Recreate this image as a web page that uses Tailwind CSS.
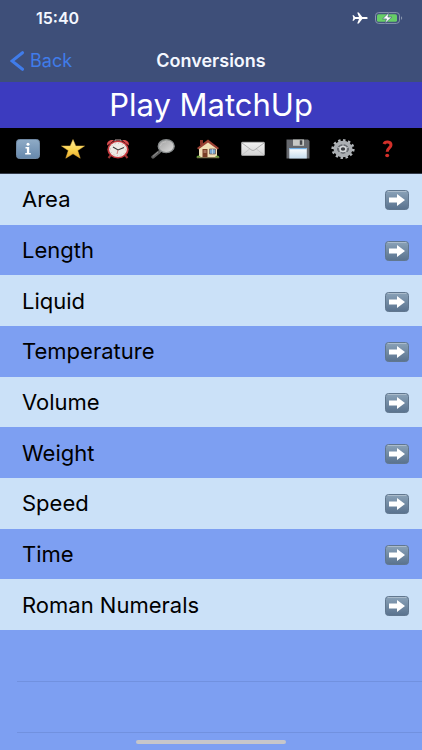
<!DOCTYPE html>
<html lang="en">
<head>
    <meta charset="UTF-8">
    <meta name="viewport" content="width=device-width, initial-scale=1.0">
    <title>Conversions</title>
    <script src="https://cdn.jsdelivr.net/npm/@tailwindcss/browser@4"></script>
</head>
<body class="bg-[#7d9ff2] font-['Inter','Liberation_Sans',sans-serif] text-black">
    <!-- Shared gradients and the row arrow -->
    <svg class="absolute" width="0" height="0" aria-hidden="true">
        <defs>
            <linearGradient id="key" x1="0" y1="0" x2="0" y2="1">
                <stop offset="0" stop-color="#8ba3b9"/>
                <stop offset="1" stop-color="#59728e"/>
            </linearGradient>
            <linearGradient id="info" x1="0" y1="0" x2="0" y2="1">
                <stop offset="0" stop-color="#8fabc6"/>
                <stop offset="1" stop-color="#6688ac"/>
            </linearGradient>
            <linearGradient id="gold" x1="0" y1="0" x2="0" y2="1">
                <stop offset="0" stop-color="#fff0a0"/>
                <stop offset="0.55" stop-color="#fbd44f"/>
                <stop offset="1" stop-color="#e9a92c"/>
            </linearGradient>
            <linearGradient id="glass" x1="0" y1="0" x2="1" y2="1">
                <stop offset="0" stop-color="#9b9b9b"/>
                <stop offset="1" stop-color="#e0e0e0"/>
            </linearGradient>
            <linearGradient id="paper" x1="0" y1="0" x2="0" y2="1">
                <stop offset="0" stop-color="#f2f2f2"/>
                <stop offset="1" stop-color="#d2d2d2"/>
            </linearGradient>
            <linearGradient id="label" x1="0" y1="0" x2="0" y2="1">
                <stop offset="0" stop-color="#ffffff"/>
                <stop offset="1" stop-color="#c5dcee"/>
            </linearGradient>
        </defs>
        <symbol id="arrow" viewBox="0 0 24 20">
            <rect x="0.5" y="0.5" width="23" height="19" rx="3" fill="url(#key)" stroke="#61778f"/>
            <path d="M2.5 1.5h19" stroke="#b3c2d0" stroke-width="0.8"/>
            <path d="M4 7.600h8V4L20 10l-8 6v-3.600H4z" fill="#fff"/>
        </symbol>
    </svg>

    <div class="min-h-screen flex flex-col">
        <!-- Status Bar and Navigation -->
        <header class="bg-[#3e4f79] text-[#f4f7ff]">
            <div class="h-10 flex items-center justify-between pl-9 pr-4 pb-1">
                <span class="text-base leading-5 font-semibold">15:40</span>
                <div class="flex items-center gap-1.5">
                    <svg class="w-4 h-3" viewBox="0 0 16 12" fill="#fff">
                        <path d="M15.800 6c0-.7-1-1.100-2-1.100H10.300L6.800.4H5.200L7 4.900H3.200L1.700 3.200H.5L1.300 6 .5 8.800h1.200l1.500-1.700H7l-1.800 4.500h1.600l3.500-4.500h3.500c1 0 2-.4 2-1.100z"/>
                    </svg>
                    <svg class="w-8 h-3" viewBox="0 0 32 12">
                        <rect x="1.500" y="0.600" width="24" height="10.800" rx="3.200" fill="none" stroke="#8996ae"/>
                        <rect x="3" y="2.200" width="20" height="7.600" rx="1.600" fill="#67ce67"/>
                        <path d="M27 4.200c1.600.5 1.600 3.100 0 3.600z" fill="#8996ae"/>
                        <path d="M15 .6 8.600 6.900h3.900L11 11.400l6.800-6.300h-3.900z" fill="#fff" stroke="#3e4f79" stroke-width="0.6"/>
                    </svg>
                </div>
            </div>
            <nav class="h-[42px] grid grid-cols-[1fr_auto_1fr] items-center px-2.5">
                <a href="#" class="flex items-center gap-1 text-lg text-[#407cea]">
                    <svg class="w-4 h-5" viewBox="0 0 16 20" fill="none" stroke="currentColor" stroke-width="3" stroke-linecap="round">
                        <path d="M12.500 1.700 2 10l10.500 8.300"/>
                    </svg>
                    Back
                </a>
                <h1 class="text-lg font-semibold">Conversions</h1>
            </nav>
        </header>

        <button class="h-[46px] bg-[#3c3bbf] text-white text-[31px] leading-9">Play MatchUp</button>

        <!-- Toolbar -->
        <div class="h-[46px] bg-black border-b border-[#333a48] grid grid-cols-9 items-center justify-items-center pl-[5px] pr-3 pb-1">
            <button aria-label="Info">
                <svg class="w-6 h-5" viewBox="0 0 24 20">
                    <rect x="0.5" y="0.5" width="23" height="19" rx="3" fill="url(#info)" stroke="#7089a4"/>
                    <circle cx="12" cy="5.2" r="1.5" fill="#fff"/>
                    <path d="M9.500 8h3.700v6h1.600v1.500H9.200V14h1.700V9.400H9.500z" fill="#fff"/>
                </svg>
            </button>
            <button aria-label="Favourites">
                <svg class="w-6 h-5" viewBox="0 0 24 20">
                    <path d="M12 .5 14.800 7h8.700l-6.800 4.600 2.500 7.600L12 14.800l-7.200 4.400 2.500-7.600L.5 7h8.700z" fill="url(#gold)" stroke="#e8b63d" stroke-width="0.5" stroke-linejoin="round"/>
                </svg>
            </button>
            <button aria-label="Timer">
                <svg class="w-6 h-5" viewBox="0 0 24 20">
                    <path d="m5 16-2.500 3M19 16l2.500 3" stroke="#9c3434" stroke-width="2"/>
                    <path d="M9 2V1h6v1" fill="none" stroke="#b9a5a5"/>
                    <path d="M1.300 6.500C0 3 4 0 8 1.200zM22.700 6.500C24 3 20 0 16 1.200z" fill="#d94d50"/>
                    <ellipse cx="12" cy="10.5" rx="10.7" ry="8.9" fill="#c5373d"/>
                    <ellipse cx="12" cy="10.5" rx="8.9" ry="7.4" fill="#eeeae5"/>
                    <ellipse cx="12" cy="10.5" rx="7.6" ry="6.2" fill="none" stroke="#a9a09c" stroke-width="0.8" stroke-dasharray="0.8 2.8"/>
                    <path d="m7 8 5 3 6-2.500" fill="none" stroke="#393939" stroke-width="1.1"/>
                    <path d="m12 11-1 4" stroke="#c5373d" stroke-width="0.6"/>
                </svg>
            </button>
            <button aria-label="Search">
                <svg class="w-6 h-5" viewBox="0 0 24 20">
                    <path d="m9.500 12-2 1.700" stroke="#bbb" stroke-width="1.8"/>
                    <path d="m8 13-6 5" stroke="#606060" stroke-width="3.4" stroke-linecap="round"/>
                    <path d="m7 13-5 4.300" stroke="#a0a0a0" stroke-width="0.8"/>
                    <ellipse cx="15.2" cy="7.2" rx="8" ry="6.5" fill="url(#glass)" stroke="#878b8c" stroke-width="1.3"/>
                    <path d="M9.500 7c.5-3 3-4 5.500-4.200" fill="none" stroke="#c9c9c9" stroke-width="0.8"/>
                </svg>
            </button>
            <button aria-label="Home">
                <svg class="w-6 h-5" viewBox="0 0 24 20">
                    <path d="M4 1h3v5H4z" fill="#8a3329"/>
                    <path d="M3 9 12 2l9 7v9.500H3z" fill="#f1dfb7"/>
                    <path d="M12 .5 23 9l-1.300 1.500L12 3.500 2.300 10.500 1 9z" fill="#9c4134"/>
                    <path d="M6.500 10h5v8.500h-5z" fill="#793d26"/>
                    <path d="M7.500 11h3v3h-3z" fill="#a6705a"/>
                    <path d="M13.500 10h6v5h-6z" fill="#76a5cf" stroke="#76605a" stroke-width="0.8"/>
                    <path d="M16.500 10v5" stroke="#dce4e9" stroke-width="0.6"/>
                    <path d="M.5 18.700c0-3 3.500-3 4.500 0zM19 18.700c.5-3 4-3 4.500 0z" fill="#659c39"/>
                    <path d="M1 18.800h22" stroke="#8b8055" stroke-width="0.8"/>
                </svg>
            </button>
            <button aria-label="Mail">
                <svg class="w-6 h-5" viewBox="0 0 24 20">
                    <rect x="0.5" y="3.2" width="23" height="13.3" rx="0.8" fill="url(#paper)" stroke="#bcbcbc" stroke-width="0.6"/>
                    <path d="m1 16 8-6.300M23 16l-8-6.300" stroke="#bababa" stroke-width="0.7"/>
                    <path d="m1 4 9 6.700c1.400 1 2.600 1 4 0L23 4" fill="none" stroke="#a7a7a7" stroke-width="0.9"/>
                </svg>
            </button>
            <button aria-label="Save">
                <svg class="w-6 h-5" viewBox="0 0 24 20">
                    <path d="M.5.500h21.500l1.500 1.500v17.500H.5z" fill="#66686d"/>
                    <path d="M7 .5h11v6.300H7z" fill="#c7c8c5"/>
                    <path d="M13.800 1.300h2.500v4.500h-2.500z" fill="#45474c"/>
                    <path d="M3.300 9h17.500v10.500H3.300z" fill="url(#label)"/>
                    <path d="M3.300 9h17.500v1.200H3.300z" fill="#6faee4"/>
                </svg>
            </button>
            <button aria-label="Settings">
                <svg class="w-6 h-5" viewBox="0 0 24 20">
                    <ellipse cx="12" cy="10" rx="10.3" ry="8.600" fill="none" stroke="#b4b8bb" stroke-width="2.6" stroke-dasharray="2.4 2.54"/>
                    <ellipse cx="12" cy="10" rx="7.5" ry="6.2" fill="none" stroke="#abafb3" stroke-width="4"/>
                    <ellipse cx="12" cy="10" rx="5.8" ry="4.7" fill="#6a6e74"/>
                    <path d="M12 10V5M12 10l5.500-1.800M12 10l3.700 4M12 10l-3.700 4M12 10 6.500 8.200" stroke="#aeb2b6" stroke-width="1.2"/>
                    <ellipse cx="12" cy="10" rx="3" ry="2.5" fill="#3a3d41" stroke="#d5d8da" stroke-width="1.6"/>
                </svg>
            </button>
            <button aria-label="Help">
                <svg class="w-6 h-5" viewBox="0 0 24 20">
                    <path d="M8 5C9 2.200 15 2.200 15 6c0 2.800-3.800 3.200-3.800 6.800" fill="none" stroke="#d3302a" stroke-width="3"/>
                    <ellipse cx="11.2" cy="16.500" rx="2" ry="1.7" fill="#d3302a"/>
                </svg>
            </button>
        </div>

        <!-- Categories -->
        <ul class="flex-1 grid auto-rows-fr text-[22px] leading-7">
            <li class="bg-[#cbe1f8]">
                <a href="#" class="h-full flex items-center justify-between pl-[22px] pr-[13px]">Area<svg class="w-6 h-5 mt-0.5"><use href="#arrow"/></svg></a>
            </li>
            <li>
                <a href="#" class="h-full flex items-center justify-between pl-[22px] pr-[13px]">Length<svg class="w-6 h-5 mt-0.5"><use href="#arrow"/></svg></a>
            </li>
            <li class="bg-[#cbe1f8]">
                <a href="#" class="h-full flex items-center justify-between pl-[22px] pr-[13px]">Liquid<svg class="w-6 h-5 mt-0.5"><use href="#arrow"/></svg></a>
            </li>
            <li>
                <a href="#" class="h-full flex items-center justify-between pl-[22px] pr-[13px]">Temperature<svg class="w-6 h-5 mt-0.5"><use href="#arrow"/></svg></a>
            </li>
            <li class="bg-[#cbe1f8]">
                <a href="#" class="h-full flex items-center justify-between pl-[22px] pr-[13px]">Volume<svg class="w-6 h-5 mt-0.5"><use href="#arrow"/></svg></a>
            </li>
            <li>
                <a href="#" class="h-full flex items-center justify-between pl-[22px] pr-[13px]">Weight<svg class="w-6 h-5 mt-0.5"><use href="#arrow"/></svg></a>
            </li>
            <li class="bg-[#cbe1f8]">
                <a href="#" class="h-full flex items-center justify-between pl-[22px] pr-[13px]">Speed<svg class="w-6 h-5 mt-0.5"><use href="#arrow"/></svg></a>
            </li>
            <li>
                <a href="#" class="h-full flex items-center justify-between pl-[22px] pr-[13px]">Time<svg class="w-6 h-5 mt-0.5"><use href="#arrow"/></svg></a>
            </li>
            <li class="bg-[#cbe1f8]">
                <a href="#" class="h-full flex items-center justify-between pl-[22px] pr-[13px]">Roman Numerals<svg class="w-6 h-5 mt-0.5"><use href="#arrow"/></svg></a>
            </li>
        </ul>

        <!-- Empty rows and home indicator -->
        <footer class="h-[120px] pl-[17px]">
            <div class="h-[52px] border-b border-[#7191df]"></div>
            <div class="h-[51px] border-b border-[#7191df]"></div>
            <div class="h-[17px] flex justify-center items-center pr-[17px]">
                <div class="w-[150px] h-1 rounded-full bg-[#c6c6ca]"></div>
            </div>
        </footer>
    </div>
</body>
</html>
